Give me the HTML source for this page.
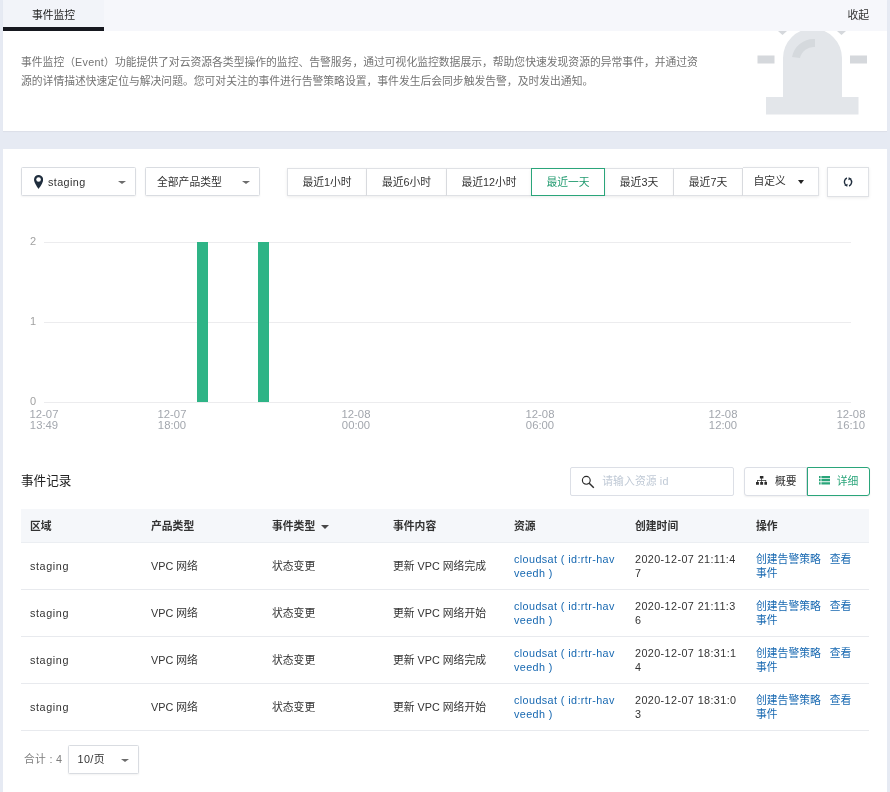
<!DOCTYPE html>
<html lang="zh-CN">
<head>
<meta charset="utf-8">
<title>事件监控</title>
<style>
*{box-sizing:border-box;margin:0;padding:0}
html,body{width:890px;height:792px;overflow:hidden}
body{background:#e6eaf3;font-family:"Liberation Sans","Noto Sans CJK SC",sans-serif;font-size:10.8px;color:#333;position:relative}
.abs{position:absolute}
#wrap{position:absolute;left:0;top:0;width:890px;height:792px;will-change:transform}
/* top card */
#card1{position:absolute;left:3px;top:0;width:884px;height:131px;background:#fff;overflow:hidden;box-shadow:0 1px 1px rgba(0,0,0,.04)}
#hdr{position:absolute;left:0;top:0;width:884px;height:31px;background:#f6f7fb}
#tab{position:absolute;left:0;top:0;width:101px;height:31px;background:#f2f4f9;border-bottom:4px solid #16181f;text-align:center;line-height:30.500px;color:#222;font-size:10.8px}
#collapse{position:absolute;right:18px;top:0;line-height:31px;color:#333;font-size:10.8px}
#desc{position:absolute;left:18px;top:52.700px;width:700px;line-height:19px;color:#747474;font-size:10.8px;white-space:nowrap}
/* main card */
#card2{position:absolute;left:3px;top:149px;width:884px;height:643px;background:#fff}
.sel{position:absolute;height:29px;top:18px;border:1px solid #d9dce1;border-radius:1.500px;background:#fff;line-height:28px;font-size:10.8px;color:#333;box-shadow:0 1px 2px rgba(0,0,0,.05)}
.caret{position:absolute;width:0;height:0;border-left:4px solid transparent;border-right:4px solid transparent;border-top:3.700px solid #6c6c6c}
.l{letter-spacing:.4px}
.tb{position:absolute;top:19px;height:28px;border:1px solid #dfe1e5;border-left:none;background:#fff;line-height:26px;text-align:center;font-size:10.8px;color:#333;box-shadow:0 1px 3px rgba(0,0,0,.08)}
.tb.first{border-left:1px solid #dfe1e5}
.tb.on{border:1px solid #2aa57a;color:#239b70;z-index:2}
/* chart */
.gl{position:absolute;left:41px;width:807px;height:1px;background:#ececee}
.yl{position:absolute;left:19px;width:14px;text-align:right;font-size:11px;color:#a2a2a2;line-height:12px;margin-top:-.3px}
.bar{position:absolute;top:93px;height:160px;background:#2eb486}
.xl{position:absolute;top:260px;width:60px;margin-left:-30px;text-align:center;font-size:11.300px;line-height:11px;color:#a3a7ae}
/* table */
#ttl{position:absolute;left:18px;top:322px;font-size:12.6px;color:#222;line-height:20px}
#search{position:absolute;left:567px;top:318px;width:164px;height:29px;border:1px solid #dcdfe6;border-radius:2px;background:#fff;line-height:27.600px;font-size:10.8px;color:#c0cad6;padding-left:31.200px;letter-spacing:.1px}
.vb{position:absolute;top:318px;height:29px;border:1px solid #dcdfe6;background:#fff;line-height:27px;font-size:10.8px;color:#333;box-shadow:0 1px 2px rgba(0,0,0,.06)}
table{position:absolute;left:18px;top:360px;width:848px;border-collapse:collapse;table-layout:fixed}
th{height:33px;background:#f5f7fa;text-align:left;font-weight:bold;font-size:10.8px;color:#333;padding:0 0 0 9px;border-bottom:1px solid #ebeef2}
td{height:47px;padding:1px 4px 0 9px;font-size:10.8px;line-height:14px;color:#333;border-bottom:1px solid #e8eaee;vertical-align:middle;word-break:break-all}
td.lk,td.lk span{color:#1768b1}
#total{position:absolute;left:21px;top:602px;font-size:10.8px;color:#7d7d7d;line-height:16px;letter-spacing:.3px}
</style>
</head>
<body>
<div id="wrap">
<div id="card1">
  <div id="hdr"></div>
  <div id="tab">事件监控</div>
  <div id="collapse">收起</div>
  <div id="desc">事件监控（<span class="l" style="letter-spacing:.3px">Event</span>）功能提供了对云资源各类型操作的监控、告警服务，通过可视化监控数据展示，帮助您快速发现资源的异常事件，并通过资<br>源的详情描述快速定位与解决问题。您可对关注的事件进行告警策略设置，事件发生后会同步触发告警，及时发出通知。</div>
  <svg class="abs" style="left:750px;top:31px" width="125" height="100" viewBox="0 0 125 100">
    <path d="M30 66 V27 A29.500 29.500 0 0 1 89 27 V66 H105.500 V83.500 H13 V66 Z" fill="#e3e6ea"/>
    <path d="M39 26 A22 22 0 0 1 62 8 V16 A14 14 0 0 0 47 27 Z" fill="#d5d9dd"/>
    <rect x="4.500" y="24.500" width="17" height="8" fill="#d5d8dc"/>
    <rect x="97" y="24.500" width="17" height="8" fill="#d5d8dc"/>
    <path d="M25 0 H34 L29.500 4 Z" fill="#d5d8dc"/>
    <path d="M84 0 H93 L88.500 4 Z" fill="#d5d8dc"/>
  </svg>
</div>

<div id="card2">
  <!-- selects -->
  <div class="sel" style="left:18px;width:115px">
    <svg class="abs" style="left:11.800px;top:6.700px" width="9.200" height="13.900" viewBox="0 0 10 15"><path d="M5 0C2.200 0 0 2.200 0 5 0 8.600 5 15 5 15S10 8.600 10 5C10 2.200 7.800 0 5 0Z" fill="#1f2d3d"/><circle cx="5" cy="4.900" r="2.500" fill="#fff"/></svg>
    <span class="abs l" style="left:26px;top:0">staging</span>
    <i class="caret" style="right:8.700px;top:12.600px"></i>
  </div>
  <div class="sel" style="left:142px;width:115px">
    <span class="abs" style="left:11px;top:0">全部产品类型</span>
    <i class="caret" style="right:8.700px;top:12.600px"></i>
  </div>
  <!-- time buttons -->
  <div class="tb first" style="left:284px;width:80px">最近1小时</div>
  <div class="tb" style="left:364px;width:80px">最近6小时</div>
  <div class="tb" style="left:444px;width:85px">最近12小时</div>
  <div class="tb on" style="left:528px;width:74px">最近一天</div>
  <div class="tb" style="left:602px;width:69px">最近3天</div>
  <div class="tb" style="left:671px;width:69px">最近7天</div>
  <div class="tb" style="left:739.500px;width:76px;top:18px;height:28.500px;text-align:left;padding-left:11px">自定义<i class="caret" style="right:13.500px;top:11.500px;border-width:4.600px 3.600px 0 3.600px;border-top-color:#222"></i></div>
  <div class="tb first" style="left:824px;width:42px;top:17.500px;height:30px">
    <svg class="abs" style="left:15.400px;top:9.700px" width="10" height="10" viewBox="0 0 10 10"><path d="M3.900 1A4.300 4.300 0 0 0 2.600 7.900" fill="none" stroke="#1f2d3d" stroke-width="1.400"/><path d="M6.100 9A4.300 4.300 0 0 0 7.400 2.100" fill="none" stroke="#1f2d3d" stroke-width="1.400"/><path d="M1.300 8.300L4.600 6.700 4.300 9.800Z M8.700 1.700L5.400 3.300 5.700 0.200Z" fill="#1f2d3d"/></svg>
  </div>

  <!-- chart -->
  <div class="gl" style="top:93px"></div>
  <div class="gl" style="top:173px"></div>
  <div class="gl" style="top:253px"></div>
  <div class="yl" style="top:86px">2</div>
  <div class="yl" style="top:166px">1</div>
  <div class="yl" style="top:246px">0</div>
  <div class="bar" style="left:194px;width:11px"></div>
  <div class="bar" style="left:255px;width:11px"></div>
  <div class="xl" style="left:41px">12-07<br>13:49</div>
  <div class="xl" style="left:169px">12-07<br>18:00</div>
  <div class="xl" style="left:353px">12-08<br>00:00</div>
  <div class="xl" style="left:537px">12-08<br>06:00</div>
  <div class="xl" style="left:720px">12-08<br>12:00</div>
  <div class="xl" style="left:848px">12-08<br>16:10</div>

  <!-- table header -->
  <div id="ttl">事件记录</div>
  <div id="search">请输入资源 <span class="l">id</span>
    <svg class="abs" style="left:10px;top:6.700px" width="14" height="14" viewBox="0 0 14 14"><circle cx="5.300" cy="5.300" r="3.900" fill="none" stroke="#2a2a2a" stroke-width="1.150"/><path d="M8.200 8.200L12.800 12.800" stroke="#2a2a2a" stroke-width="1.450"/></svg>
  </div>
  <div class="vb" style="left:741px;width:63px;border-radius:3px 0 0 3px">
    <svg class="abs" style="left:11.200px;top:8.100px" width="11.300" height="8.800" viewBox="0 0 11.300 8.800"><path d="M3.900 0h3.500v2.500h-3.500zM0 5.900h2.900v2.900h-2.900zM4.200 5.900h2.900v2.900h-2.900zM8.400 5.900h2.900v2.900h-2.900zM1.100 3.900h9.100v.8h-9.100zM5.300 2.500h.7v1.500h-.7zM1.100 4.600h.7v1.400h-.7zM9.500 4.600h.7v1.400h-.7zM5.300 4.600h.7v1.400h-.7z" fill="#2b2b2b"/></svg>
    <span class="abs" style="left:30px;top:0">概要</span>
  </div>
  <div class="vb" style="left:804px;width:63px;border-color:#2aa57a;color:#2aa57a;border-radius:0 3px 3px 0">
    <svg class="abs" style="left:10.600px;top:8.200px" width="11.500" height="8.400" viewBox="0 0 11.500 8.400"><path d="M0 0h1.600v2.200h-1.600zM2.400 0h9.100v2.200h-9.100zM0 3.100h1.600v2.200h-1.600zM2.400 3.100h9.100v2.200h-9.100zM0 6.200h1.600v2.200h-1.600zM2.400 6.200h9.100v2.200h-9.100z" fill="#2aa57a"/></svg>
    <span class="abs" style="left:28.700px;top:0">详细</span>
  </div>

  <table>
    <colgroup><col style="width:121px"><col style="width:121px"><col style="width:121px"><col style="width:121px"><col style="width:121px"><col style="width:121px"><col style="width:122px"></colgroup>
    <tr><th>区域</th><th>产品类型</th><th>事件类型 <i class="caret" style="position:relative;display:inline-block;top:-1px;left:2.500px;border-width:4.700px 4.200px 0 4.200px;border-top-color:#484848"></i></th><th>事件内容</th><th>资源</th><th>创建时间</th><th>操作</th></tr>
    <tr><td><span class="l" style="letter-spacing:.6px">staging</span></td><td>VPC 网络</td><td>状态变更</td><td>更新 VPC 网络完成</td><td class="lk"><span class="l">cloudsat ( id:rtr-hav<br>veedh )</span></td><td><span class="l">2020-12-07 21:11:4<br>7</span></td><td class="lk">创建告警策略&nbsp;&nbsp; 查看<br>事件</td></tr>
    <tr><td><span class="l" style="letter-spacing:.6px">staging</span></td><td>VPC 网络</td><td>状态变更</td><td>更新 VPC 网络开始</td><td class="lk"><span class="l">cloudsat ( id:rtr-hav<br>veedh )</span></td><td><span class="l">2020-12-07 21:11:3<br>6</span></td><td class="lk">创建告警策略&nbsp;&nbsp; 查看<br>事件</td></tr>
    <tr><td><span class="l" style="letter-spacing:.6px">staging</span></td><td>VPC 网络</td><td>状态变更</td><td>更新 VPC 网络完成</td><td class="lk"><span class="l">cloudsat ( id:rtr-hav<br>veedh )</span></td><td><span class="l">2020-12-07 18:31:1<br>4</span></td><td class="lk">创建告警策略&nbsp;&nbsp; 查看<br>事件</td></tr>
    <tr><td><span class="l" style="letter-spacing:.6px">staging</span></td><td>VPC 网络</td><td>状态变更</td><td>更新 VPC 网络开始</td><td class="lk"><span class="l">cloudsat ( id:rtr-hav<br>veedh )</span></td><td><span class="l">2020-12-07 18:31:0<br>3</span></td><td class="lk">创建告警策略&nbsp;&nbsp; 查看<br>事件</td></tr>
  </table>

  <div id="total">合计 : 4</div>
  <div class="sel" style="left:65px;top:596px;width:71px">
    <span class="abs" style="left:8.500px;top:-1px;letter-spacing:.4px"><span class="l">10/</span>页</span>
    <i class="caret" style="right:8.700px;top:12.600px"></i>
  </div>
</div>
</div>
</body>
</html>
